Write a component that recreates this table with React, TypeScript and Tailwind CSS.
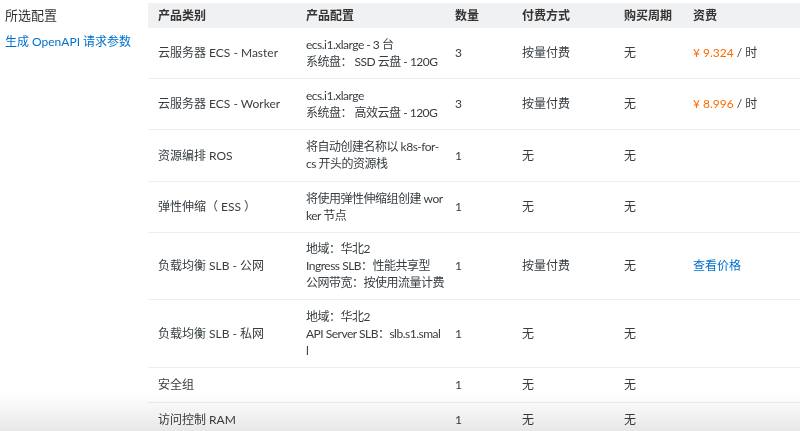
import React from "react";

type Row = {
    name: string;
    config: string[];
    count: string;
    pay: string;
    period: string;
    fee?: "price1" | "price2" | "link";
    h: string;
};

const rows: Row[] = [
    { name: "云服务器 ECS - Master", config: ["ecs.i1.xlarge - 3 台", "系统盘： SSD 云盘 - 120G"], count: "3", pay: "按量付费", period: "无", fee: "price1", h: "h-[50px]" },
    { name: "云服务器 ECS - Worker", config: ["ecs.i1.xlarge", "系统盘： 高效云盘 - 120G"], count: "3", pay: "按量付费", period: "无", fee: "price2", h: "h-[51px]" },
    { name: "资源编排 ROS", config: ["将自动创建名称以 k8s-for-", "cs 开头的资源栈"], count: "1", pay: "无", period: "无", h: "h-[52px]" },
    { name: "弹性伸缩（ ESS ）", config: ["将使用弹性伸缩组创建 wor", "ker 节点"], count: "1", pay: "无", period: "无", h: "h-[51px]" },
    { name: "负载均衡 SLB - 公网", config: ["地域：华北2", "Ingress SLB：性能共享型", "公网带宽：按使用流量计费"], count: "1", pay: "按量付费", period: "无", fee: "link", h: "h-[67px]" },
    { name: "负载均衡 SLB - 私网", config: ["地域：华北2", "API Server SLB：slb.s1.smal", "l"], count: "1", pay: "无", period: "无", h: "h-[68px]" },
    { name: "安全组", config: [], count: "1", pay: "无", period: "无", h: "h-[35px]" },
    { name: "访问控制 RAM", config: [], count: "1", pay: "无", period: "无", h: "h-[35px]" },
];

function Fee({ kind }: { kind?: Row["fee"] }) {
    if (kind == "price1" || kind == "price2") {
        return (
            <span>
                <span className="text-[#ff6a00]">¥ {kind == "price1" ? "9.324" : "8.996"}</span> / 时
            </span>
        );
    }
    if (kind == "link") return <span className="text-[#0070cc]">查看价格</span>;
    return null;
}

export default function App() {
    return (
        <div className="relative w-[800px] h-[431px] overflow-hidden bg-white flex text-[12px] leading-[17px] text-[#373d41] font-['Lato','Noto_Sans_CJK_SC',sans-serif]">
            <div className="w-[148px] shrink-0 pl-[5px] pt-[6px]">
                <div className="text-[13px] leading-[18px] text-[#333]">所选配置</div>
                <div className="mt-[9px] text-[#0070cc]">生成 OpenAPI 请求参数</div>
            </div>

            <div className="flex-1 pt-[3px]">
                <table className="w-full table-fixed border-collapse">
                    <colgroup>
                        <col className="w-[148px]" />
                        <col className="w-[149px]" />
                        <col className="w-[67px]" />
                        <col className="w-[102px]" />
                        <col className="w-[69px]" />
                        <col />
                    </colgroup>
                    <thead>
                        <tr className="h-[25px] bg-[#f0f1f3] text-left text-[#333]">
                            <th className="pl-[10px] font-bold">产品类别</th>
                            <th className="pl-[10px] font-bold">产品配置</th>
                            <th className="pl-[10px] font-bold">数量</th>
                            <th className="pl-[10px] font-bold">付费方式</th>
                            <th className="pl-[10px] font-bold">购买周期</th>
                            <th className="pl-[10px] font-bold">资费</th>
                        </tr>
                    </thead>
                    <tbody>
                        {rows.map((r) => (
                            <tr key={r.name} className={"border-b border-[#eeeeee] align-middle " + r.h}>
                                <td className="pl-[10px] whitespace-nowrap">{r.name}</td>
                                <td className="pl-[10px] whitespace-nowrap tracking-[-0.5px]">
                                    {r.config.map((c) => (
                                        <div key={c}>{c}</div>
                                    ))}
                                </td>
                                <td className="pl-[10px]">{r.count}</td>
                                <td className="pl-[10px]">{r.pay}</td>
                                <td className="pl-[10px]">{r.period}</td>
                                <td className="pl-[10px]">
                                    <Fee kind={r.fee} />
                                </td>
                            </tr>
                        ))}
                    </tbody>
                </table>
            </div>

            <div className="pointer-events-none absolute left-0 right-0 bottom-0 h-[38px] mix-blend-multiply bg-linear-to-b from-[#ffffff] to-[#e8e8e8]"></div>
        </div>
    );
}
